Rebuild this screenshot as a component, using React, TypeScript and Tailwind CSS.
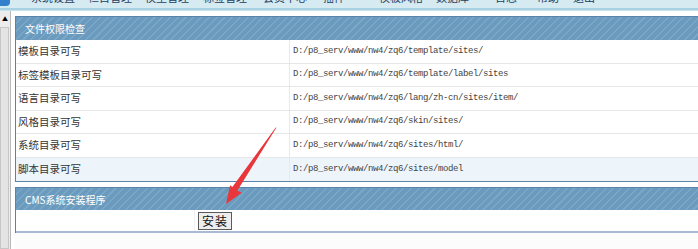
import React from 'react';

interface PermRow {
  label: string;
  path: string;
}

const rows: PermRow[] = [
  { label: '模板目录可写', path: 'D:/p8_serv/www/nw4/zq6/template/sites/' },
  { label: '标签模板目录可写', path: 'D:/p8_serv/www/nw4/zq6/template/label/sites' },
  { label: '语言目录可写', path: 'D:/p8_serv/www/nw4/zq6/lang/zh-cn/sites/item/' },
  { label: '风格目录可写', path: 'D:/p8_serv/www/nw4/zq6/skin/sites/' },
  { label: '系统目录可写', path: 'D:/p8_serv/www/nw4/zq6/sites/html/' },
  { label: '脚本目录可写', path: 'D:/p8_serv/www/nw4/zq6/sites/model' },
];

const stripe =
  'bg-[repeating-linear-gradient(135deg,#6a9bbe_0px,#6a9bbe_4px,#7aa7c6_4px,#7aa7c6_5.5px)]';

const App = () => {
  return (
    <div className="relative w-[698px] h-[249px] overflow-hidden bg-white font-['Noto_Sans_CJK_SC',sans-serif]">
      {/* top nav strip, mostly scrolled away */}
      <div className="h-[8px] bg-[#d6eaf2] flex items-end overflow-hidden relative">
        <div className="absolute left-0 top-0 w-[10px] h-[6px] bg-[#3580cc] rounded-br-[4px]" />
        <div className="flex text-[11px] leading-none text-[#1f3f5f] translate-y-[-5px] whitespace-nowrap">
          <span className="ml-[31px]">系统设置</span>
          <span className="ml-[13px]">栏目管理</span>
          <span className="ml-[13px]">模型管理</span>
          <span className="ml-[14px]">标签管理</span>
          <span className="ml-[16px]">会员中心</span>
          <span className="ml-[16px]">插件</span>
          <span className="ml-[34px]">模板风格</span>
          <span className="ml-[13px]">数据库</span>
          <span className="ml-[26px]">日志</span>
          <span className="ml-[20px]">帮助</span>
          <span className="ml-[14px]">退出</span>
        </div>
      </div>
      <div className="h-[2px] bg-[#a8d2e3]" />
      <div className="h-[1px] bg-[#c8e3ee]" />

      <div className="flex h-[238px]">
        {/* left scrollbar */}
        <div className="w-[11px] shrink-0 border-r border-[#b9b9b9] bg-[#ececec] flex flex-col">
          <div className="h-[16px] flex items-center justify-center text-[6px] text-black leading-none">▲</div>
          <div className="flex-1 mr-[1px] border border-[#c6c6c6] bg-[#e4e4e4]" />
        </div>

        <div className="flex-1 min-w-0 pl-[4px] pt-[5px]">
          {/* file permission panel */}
          <div className="w-[700px] border-t border-l border-b border-[#5983ab]">
            <div className={`h-[23px] flex items-center pl-[9px] text-[10px] text-white ${stripe}`}>
              文件权限检查
            </div>
            {rows.map((r, i) => (
              <div
                key={r.label}
                className={`flex h-[23.5px] text-[10.5px] text-[#333] ${
                  i < rows.length - 1 ? 'border-b border-[#e6e6e6]' : ''
                } ${i === rows.length - 1 ? 'bg-[#edf5fb]' : 'bg-white'}`}
              >
                <div className="w-[274px] shrink-0 flex items-center pl-[2px] border-r border-[#e9e9e9]">{r.label}</div>
                <div className="flex items-center pl-[3px] font-['Liberation_Mono',monospace] text-[9px] tracking-[-0.4px] text-[#444]">
                  {r.path}
                </div>
              </div>
            ))}
          </div>

          {/* install panel */}
          <div className="mt-[5px] w-[700px] border-t border-l border-[#5983ab]">
            <div className={`h-[22px] flex items-center pl-[9px] text-[10px] text-white ${stripe}`}>
              CMS系统安装程序
            </div>
            <div className="flex h-[23px] border-b-2 border-[#a9b9d6] bg-white">
              <div className="w-[179px] shrink-0 border-r border-[#f0f0f0]" />
              <div className="flex items-center pl-[3px]">
                <button className="h-[18px] px-[3px] border border-[#5a5a5a] bg-[#ededed] text-[12px] leading-none text-[#111] tracking-[1px]">
                  安装
                </button>
              </div>
            </div>
          </div>
          <div className="h-[20px] bg-[#fcfcfc]" />
        </div>
      </div>

      {/* red annotation arrow */}
      <svg className="absolute left-0 top-0 pointer-events-none" width="698" height="249">
        <polygon
          points="276.3,127.8 275.7,127.4 232.4,187.0 230.1,185.2 226,204 241.7,192.8 237.4,190.4"
          fill="#e9363a"
        />
      </svg>
    </div>
  );
};

export default App;
